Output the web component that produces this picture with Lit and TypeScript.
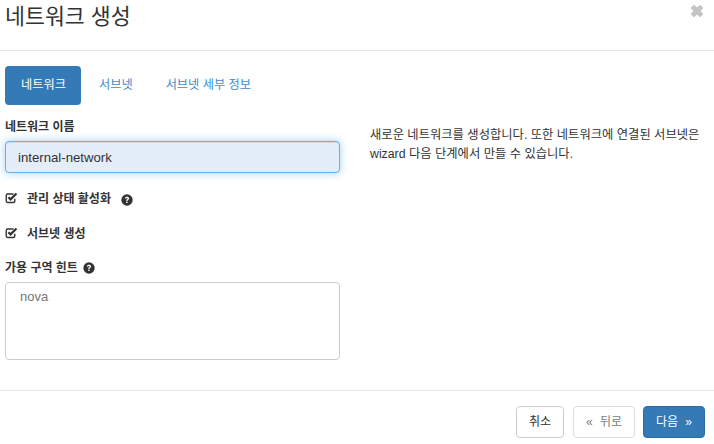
import { LitElement, html, css, svg } from "lit";
import { customElement } from "lit/decorators.js";

const check = svg`<svg class="cb" viewBox="0 0 14 13" width="13" height="12"><path d="M10.6 7.2v2.6c0 .9-.7 1.6-1.6 1.6H2.9c-.9 0-1.6-.7-1.6-1.6V3.7c0-.9.7-1.6 1.6-1.6h6.3" fill="none" stroke="#333" stroke-width="1.5"/><path d="M3.6 5.6 6 8l6.4-6.4" fill="none" stroke="#333" stroke-width="2.4"/></svg>`;
const help = svg`<svg class="help" viewBox="0 0 12 12" width="12" height="12"><circle cx="6" cy="6" r="5.7" fill="#333"/><path d="M3.9 4.6c.1-1.3 1-1.9 2.1-1.9 1.2 0 2.1.7 2.1 1.7 0 1.4-1.6 1.3-1.6 2.5H5.2c0-1.7 1.5-1.7 1.5-2.4 0-.3-.3-.6-.8-.6-.5 0-.8.3-.9.8z" fill="#fff"/><rect x="5.2" y="7.6" width="1.4" height="1.4" fill="#fff"/></svg>`;

@customElement("app-root")
export class AppRoot extends LitElement {
  static styles = css`
    :host {
      display: block;
      width: 714px;
      height: 444px;
      overflow: hidden;
      background: #fff;
      color: #333;
      font: 12px/17px "Liberation Sans", "Noto Sans CJK KR", sans-serif;
    }
    * { box-sizing: border-box; }
    .header {
      height: 51px;
      border-bottom: 1px solid #e5e5e5;
      padding: 0 9px 0 5px;
      display: flex;
      justify-content: space-between;
      align-items: flex-start;
    }
    h1 {
      margin: 2px 0 0;
      font-size: 21.7px;
      font-weight: 400;
      line-height: 30px;
    }
    .close { margin-top: 3px; display: block; }
    .body {
      height: 339px;
      padding: 15px 15px 0 5px;
    }
    .tabs { display: flex; height: 39px; margin-bottom: 14px; }
    .tab {
      padding: 0 15px;
      line-height: 38px;
      color: #428bca;
      border-radius: 4px;
      margin-right: 3px;
      white-space: nowrap;
      font-size: 12.2px;
    }
    .tab.active { background: #337ab7; color: #fff; width: 76px; margin-right: 3px; padding: 0 0 0 16px; }
    .cols { display: flex; }
    .form { width: 335px; flex: none; }
    .help-col {
      margin-left: 30px;
      padding-top: 7px;
      flex: 1;
      line-height: 19px;
      font-size: 12.3px;
      white-space: nowrap;
    }
    label.title { display: block; font-weight: 700; margin-bottom: 5px; line-height: 17px; height: 17px; }
    label.title .help { vertical-align: -2px; margin-left: 2px; }
    .input {
      height: 32px;
      background: #e4edfa;
      border: 1px solid #66afe9;
      border-radius: 4px;
      box-shadow: inset 0 1px 1px rgba(0,0,0,.075), 0 0 8px rgba(102,175,233,.6);
      padding: 0 12px;
      line-height: 31px;
      font-size: 13.2px;
      color: #333;
    }
    .check {
      display: flex;
      align-items: center;
      font-weight: 700;
      height: 17px;
    }
    .cb { display: block; margin: -3px 9px 0 0; flex: none; }
    .check .help { margin-left: 10px; }
    .c1 { margin-top: 18px; }
    .c2 { margin-top: 18px; }
    .az { margin-top: 17px; }
    .textarea {
      height: 78px;
      border: 1px solid #ccc;
      border-radius: 4px;
      padding: 5px 14px;
      color: #777;
      font-size: 13px;
      line-height: 18px;
    }
    .footer {
      height: 54px;
      border-top: 1px solid #e5e5e5;
      padding: 15px 9px 0 0;
      display: flex;
      justify-content: flex-end;
    }
    .btn {
      height: 32px;
      border: 1px solid #ccc;
      border-radius: 4px;
      line-height: 30px;
      text-align: center;
      background: #fff;
      color: #333;
      white-space: nowrap;
    }
    .cancel { width: 48px; margin-right: 9px; }
    .back { width: 62px; margin-right: 8px; opacity: .65; }
    .next { width: 62px; background: #337ab7; border-color: #2e6da4; color: #fff; }
    .gap { margin: 0 2px; }
    .gap2 { margin: 0 2px; }
  `;

  render() {
    return html`
      <div class="header">
        <h1>네트워크 생성</h1>
        <svg class="close" width="16" height="16" viewBox="0 0 16 16"><path d="M3 5 5 3 8 6l3-3 2 2-3 3 3 3-2 2-3-3-3 3-2-2 3-3z" fill="#c4c4c4" stroke="#c4c4c4" stroke-width="2" stroke-linejoin="round"/></svg>
      </div>
      <div class="body">
        <div class="tabs">
          <div class="tab active">네트워크</div>
          <div class="tab">서브넷</div>
          <div class="tab">서브넷 세부 정보</div>
        </div>
        <div class="cols">
          <div class="form">
            <label class="title">네트워크 이름</label>
            <div class="input">internal-network</div>
            <div class="check c1">${check}관리 상태 활성화${help}</div>
            <div class="check c2">${check}서브넷 생성</div>
            <label class="title az">가용 구역 힌트 ${help}</label>
            <div class="textarea">nova</div>
          </div>
          <div class="help-col">새로운 네트워크를 생성합니다. 또한 네트워크에 연결된 서브넷은<br />wizard 다음 단계에서 만들 수 있습니다.</div>
        </div>
      </div>
      <div class="footer">
        <div class="btn cancel">취소</div>
        <div class="btn back">«<span class="gap"></span> 뒤로</div>
        <div class="btn next">다음 <span class="gap2"></span>»</div>
      </div>
    `;
  }
}
